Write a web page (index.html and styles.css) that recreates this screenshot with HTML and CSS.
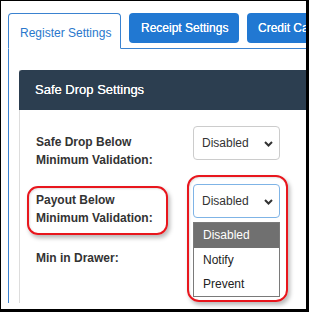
FILE: index.html
```html
<!DOCTYPE html>
<html>
    <head>
        <title>Register Settings</title>
        <meta charset="UTF-8">
        <meta name="viewport" content="width=device-width, initial-scale=1.0">
        <link rel="stylesheet" href="styles.css">
    </head>
    <body>
        <div class="frame">
            <div class="page">
                <div class="tabs">
                    <div class="tab active">Register Settings</div>
                    <div class="tab btn">Receipt Settings</div>
                    <div class="tab btn wide">Credit Card Settings</div>
                </div>

                <div class="tab-content">
                    <div class="panel">
                        <div class="panel-heading">Safe Drop Settings</div>
                        <div class="panel-body">
                            <div class="form-row">
                                <label>Safe Drop Below<br>Minimum Validation:</label>
                                <div class="select-wrap">
                                    <div class="select">
                                        <span>Disabled</span>
                                        <svg class="chevron" width="9" height="6" viewBox="0 0 9 6"><path d="M1 1 L4.5 4.5 L8 1" fill="none" stroke="#333" stroke-width="2"/></svg>
                                    </div>
                                </div>
                            </div>
                            <div class="form-row">
                                <label>Payout Below<br>Minimum Validation:</label>
                                <div class="select-wrap">
                                    <div class="select focus">
                                        <span>Disabled</span>
                                        <svg class="chevron" width="9" height="6" viewBox="0 0 9 6"><path d="M1 1 L4.5 4.5 L8 1" fill="none" stroke="#333" stroke-width="2"/></svg>
                                    </div>
                                    <ul class="dropdown">
                                        <li class="selected">Disabled</li>
                                        <li>Notify</li>
                                        <li>Prevent</li>
                                    </ul>
                                </div>
                            </div>
                            <div class="form-row">
                                <label>Min in Drawer:</label>
                            </div>
                        </div>
                    </div>
                </div>
            </div>

            <div class="mark mark-label"></div>
            <div class="mark mark-select"></div>
        </div>
    </body>
</html>
```

FILE: styles.css
```css
:root {
    --blue: #2178d2;
    --tab-border: #3a82d0;
    --navy: #2c3e50;
    --mark: #e8161d;
    --text: #333;
}

* {
    box-sizing: border-box;
    margin: 0;
    padding: 0;
}

body {
    font-family: 'Liberation Sans', Arial, sans-serif;
    font-size: 12px;
    color: var(--text);
    background: #fff;
}

.frame {
    position: relative;
    width: 309px;
    height: 312px;
    border-style: solid;
    border-color: #000;
    border-width: 1px 3px 3px 1px;
    background: #fff;
    padding: 12px 0 0 7px;
    overflow: hidden;
}

.page {
    height: 290px;
    width: 298px;
    overflow: hidden;
}

/* tabs */

.tabs {
    display: flex;
    gap: 8px;
    align-items: flex-start;
    margin-bottom: -1px;
    position: relative;
    z-index: 1;
}

.tab {
    flex-shrink: 0;
    white-space: nowrap;
    font-size: 12px;
}

.tab.active {
    width: 113px;
    height: 36px;
    border: 1px solid var(--tab-border);
    border-bottom-color: #fff;
    border-radius: 4px 4px 0 0;
    background: #fff;
    color: #2a78cc;
    padding: 12px 0 0 11px;
}

.tab.btn {
    width: 110px;
    height: 30px;
    background: var(--blue);
    color: #fff;
    border-radius: 4px;
    line-height: 30px;
    padding-left: 12px;
    text-shadow: 0 0 0.4px #fff;
}

.tab.btn.wide {
    width: 140px;
    padding-left: 11px;
}

.tab-content {
    border-top: 1px solid var(--tab-border);
    border-left: 1px solid var(--tab-border);
    padding: 21px 0 0 10px;
    height: 260px;
}

/* panel */

.panel {
    border-left: 1px solid #ddd;
    height: 100%;
}

.panel-heading {
    height: 40px;
    line-height: 40px;
    background: var(--navy);
    color: #fff;
    font-size: 13px;
    border-top-left-radius: 3px;
    margin-left: -1px;
    padding-left: 16px;
    text-shadow: 0 0 0.4px #fff;
}

.panel-body {
    padding: 16px 0 0 16px;
}

.form-row {
    display: grid;
    grid-template-columns: 157px 87px;
    height: 58px;
}

.form-row label {
    font-weight: bold;
    line-height: 18px;
    padding-top: 7px;
    color: #333;
}

.select-wrap {
    position: relative;
}

.select {
    height: 34px;
    border: 1px solid #ccc;
    border-radius: 4px;
    display: flex;
    align-items: center;
    justify-content: space-between;
    padding: 0 6px 0 8px;
    background: #fff;
}

.select.focus {
    border-color: #7fb4e6;
}

.chevron {
    display: block;
    margin-top: 1px;
}

.dropdown {
    position: absolute;
    top: 38px;
    left: 0;
    width: 87px;
    list-style: none;
    border: 1px solid #7a7a7a;
    background: #fff;
    z-index: 2;
}

.dropdown li {
    height: 24px;
    line-height: 24px;
    padding-left: 9px;
    color: #222;
}

.dropdown li.selected {
    height: 25px;
    line-height: 25px;
    background: #707070;
    color: #fff;
}

/* red callouts */

.mark {
    position: absolute;
    border: 2px solid var(--mark);
    border-radius: 11px;
    box-shadow: 2px 3px 4px rgba(0, 0, 0, 0.28), inset 1px 1px 2px rgba(0, 0, 0, 0.12);
    z-index: 3;
}

.mark-label {
    left: 26px;
    top: 185px;
    width: 141px;
    height: 49px;
}

.mark-select {
    left: 186px;
    top: 174px;
    width: 101px;
    height: 127px;
    border-radius: 12px;
}
```
